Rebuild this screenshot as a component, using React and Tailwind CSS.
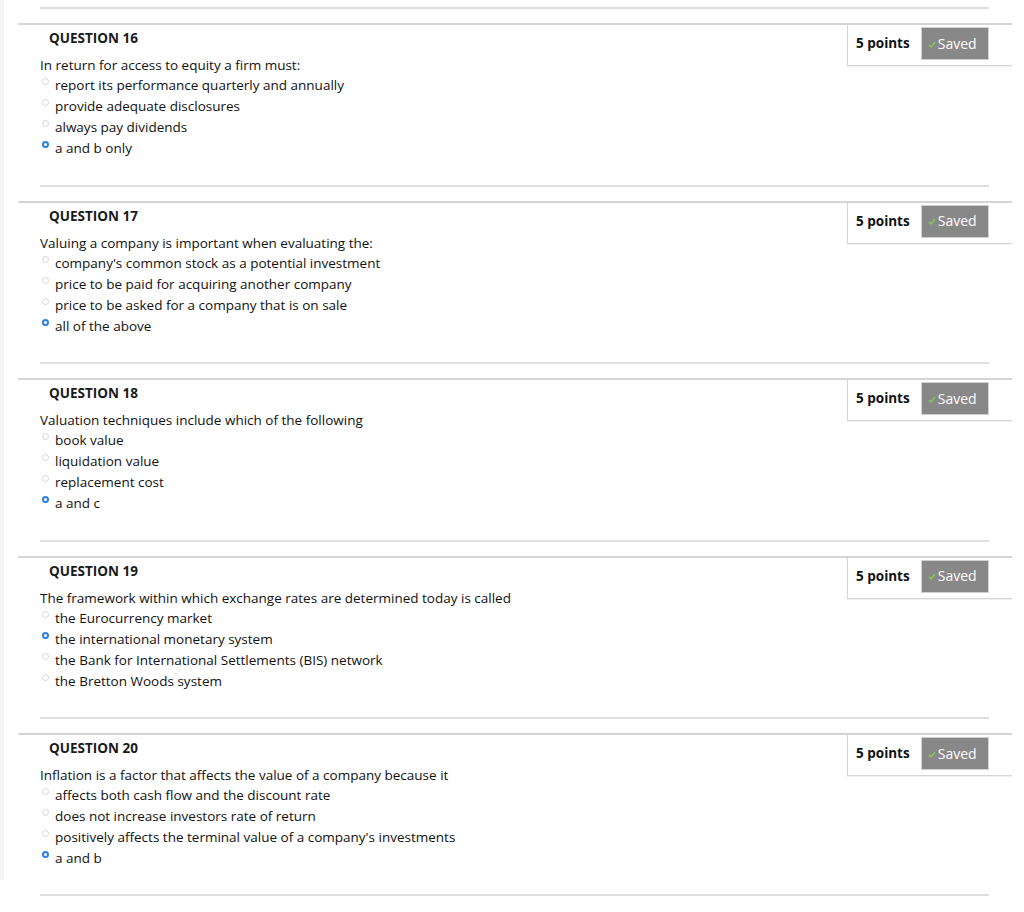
import React from "react";

const questions = [
  {
    n: 16,
    text: "In return for access to equity a firm must:",
    options: [
      "report its performance quarterly and annually",
      "provide adequate disclosures",
      "always pay dividends",
      "a and b only",
    ],
    sel: 3,
  },
  {
    n: 17,
    text: "Valuing a company is important when evaluating the:",
    options: [
      "company's common stock as a potential investment",
      "price to be paid for acquiring another company",
      "price to be asked for a company that is on sale",
      "all of the above",
    ],
    sel: 3,
  },
  {
    n: 18,
    text: "Valuation techniques include which of the following",
    options: ["book value", "liquidation value", "replacement cost", "a and c"],
    sel: 3,
  },
  {
    n: 19,
    text: "The framework within which exchange rates are determined today is called",
    options: [
      "the Eurocurrency market",
      "the international monetary system",
      "the Bank for International Settlements (BIS) network",
      "the Bretton Woods system",
    ],
    sel: 1,
  },
  {
    n: 20,
    text: "Inflation is a factor that affects the value of a company because it",
    options: [
      "affects both cash flow and the discount rate",
      "does not increase investors rate of return",
      "positively affects the terminal value of a company's investments",
      "a and b",
    ],
    sel: 3,
  },
];

function Radio({ on }) {
  return on ? (
    <span className="mt-[3px] block h-[7px] w-[7px] shrink-0 rounded-full border-2 border-[#2d7fe0] bg-white" />
  ) : (
    <span className="mt-[3px] block h-[7px] w-[7px] shrink-0 rounded-full border border-[#d6d6d6] bg-white" />
  );
}

function Question({ q, last }) {
  return (
    <div className={last ? "pb-[10.5px]" : "pb-[25.5px]"}>
      <div className="ml-[36px] h-[2px] w-[949px] bg-[#dedede]" />
      <div className="ml-[14px] mt-[14px] flex w-[994px] border-t-2 border-[#d4d4d4]">
        <div className="flex-1">
          <div className="pl-[31px] pt-[4px] text-[13.5px] font-bold leading-[18px] text-[#1a1a1a]">
            QUESTION {q.n}
          </div>
          <div className="mt-[8px] pl-[22px] text-[13.5px] leading-[20px] text-[#111]">{q.text}</div>
          {q.options.map((o, i) => (
            <div key={i} className="flex items-start pl-[24px] text-[13.5px] leading-[21px] text-[#111]">
              <Radio on={i === q.sel} />
              <span className="ml-[6px]">{o}</span>
            </div>
          ))}
        </div>
        <div className="flex h-[41px] w-[165px] items-start border-b border-l border-[#d6d6d6] pl-[8px] shadow-[0_1px_1px_rgba(0,0,0,0.06)]">
          <span className="mt-[9px] text-[13.5px] font-bold leading-[18px] text-[#111]">5 points</span>
          <div className="ml-[11px] mt-[2px] flex h-[33px] w-[68px] items-center border border-[#d0d0d0] bg-[#888888] pl-[6px]">
            <svg width="8" height="7" viewBox="0 0 8 7" className="mt-[1px]">
              <polyline points="1,4 3,6 7,1" fill="none" stroke="#7fd14a" strokeWidth="1.3" />
            </svg>
            <span className="ml-[2px] text-[14px] leading-[18px] text-white">Saved</span>
          </div>
        </div>
      </div>
    </div>
  );
}

export default function App() {
  return (
    <div className="min-h-[912px] w-[1024px] bg-white" style={{ fontFamily: "'Open Sans', 'Noto Sans', sans-serif" }}>
      <div className="border-l-4 border-[#f4f4f4] pt-[7px]">
        {questions.map((q, i) => (
          <Question key={q.n} q={q} last={i === questions.length - 1} />
        ))}
      </div>
      <div className="ml-[40px] mt-[14px] h-[2px] w-[949px] bg-[#dedede]" />
    </div>
  );
}
